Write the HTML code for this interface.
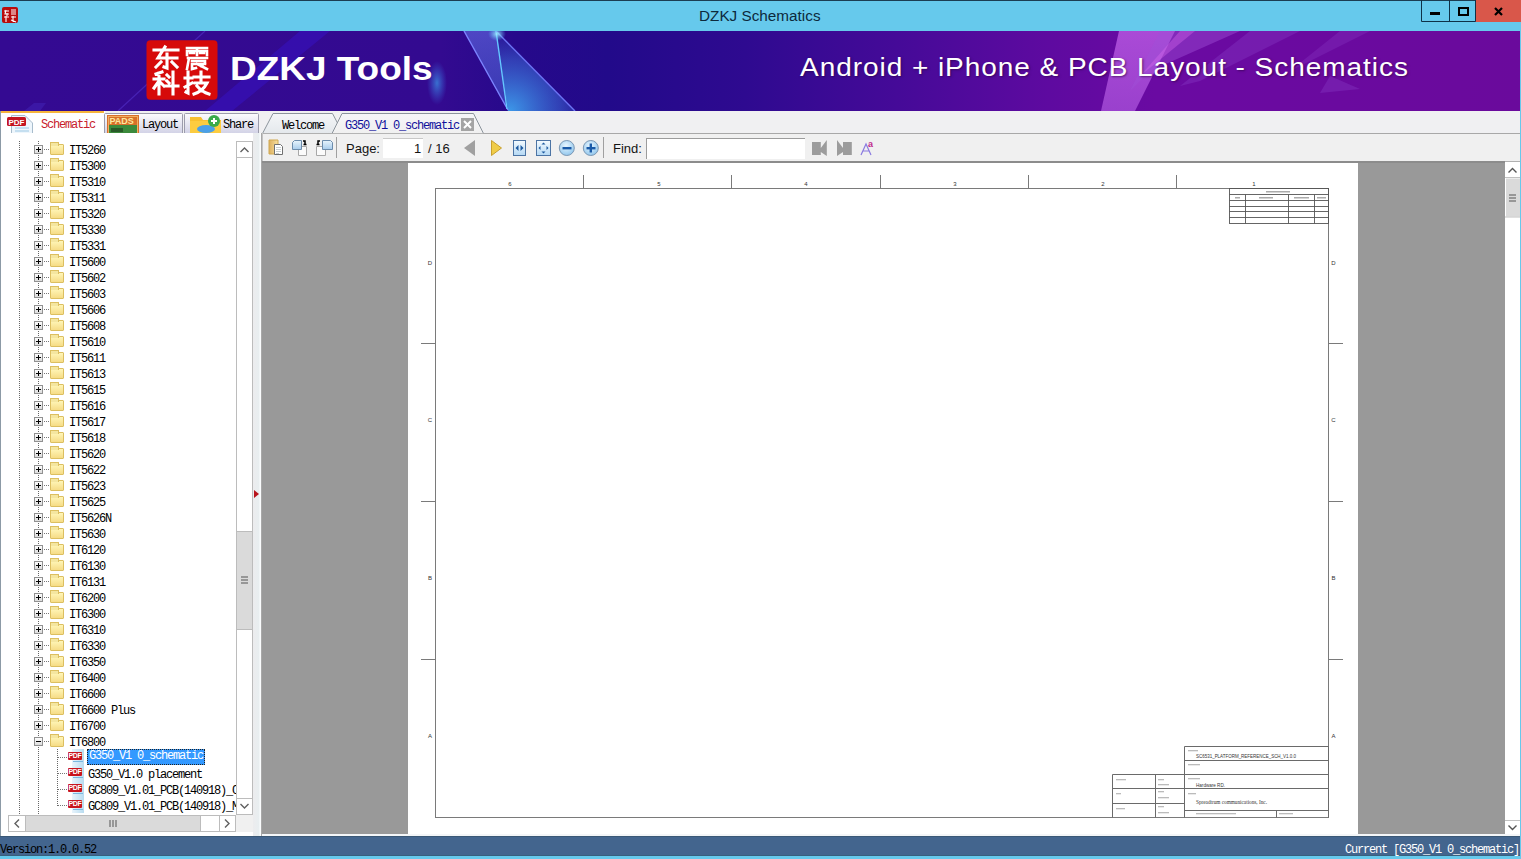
<!DOCTYPE html>
<html><head><meta charset="utf-8"><style>
*{margin:0;padding:0;box-sizing:border-box}
html,body{width:1521px;height:859px;overflow:hidden;background:#f0f0f0;font-family:"Liberation Sans",sans-serif;position:relative}
.abs{position:absolute}
#title{position:absolute;left:0;top:0;width:1521px;height:31px;background:#66c9ec;border-top:1px solid #1b3d52}
#title .t{position:absolute;left:699px;top:6px;font-size:15.3px;color:#0d2a3c;white-space:nowrap}
#winb{position:absolute;left:1421px;top:0;width:100px;height:22px}
#banner{position:absolute;left:0;top:31px;width:1520px;height:80px;overflow:hidden;background:linear-gradient(90deg,#330a90 0%,#330a90 30%,#2c0a8e 40%,#3a0b94 55%,#5a0aa0 75%,#6a0a9e 100%)}
#rborder{position:absolute;left:1520px;top:0;width:1px;height:859px;background:#66c9ec}
#tabs{position:absolute;left:0;top:111px;width:1520px;height:22px;background:#f0f0f2}
#left{position:absolute;left:0;top:133px;width:262px;height:703px;background:#fff;overflow:hidden}
#toolbar{position:absolute;left:262px;top:133px;width:1258px;height:28px;background:#f0f0f0;border-top:1px solid #b4b4b4}
#doc{position:absolute;left:262px;top:161px;width:1243px;height:673px;background:#999;border-top:2px solid #8c8c8c;overflow:hidden}
#page{position:absolute;left:146px;top:0px;width:950px;height:700px;background:#fff}
#vscroll{position:absolute;left:1505px;top:161px;width:15px;height:673px;background:#fff}
#strip{position:absolute;left:262px;top:834px;width:1258px;height:2px;background:#f4f6f8}
#status{position:absolute;left:0;top:836px;width:1520px;height:20px;background:#43658e;border-top:1px solid #3a5876;border-bottom:1px solid #38607e}
#bottom{position:absolute;left:0;top:856px;width:1521px;height:3px;background:#66c9ec}
.mono{font-family:"Liberation Mono",monospace;font-size:12px;letter-spacing:-1.2px;white-space:nowrap}
/* tree */
.row{position:absolute;left:0;height:16px;width:262px}
.pb{position:absolute;left:34px;top:4px;width:9px;height:9px;border:1px solid #919191;background:linear-gradient(#fdfdfd,#dcdcdc)}
.ph{position:absolute;left:1px;top:3px;width:5px;height:1px;background:#000}
.pv{position:absolute;left:3px;top:1px;width:1px;height:5px;background:#000}
.dh{position:absolute;left:44px;top:8px;width:6px;height:1px;background:repeating-linear-gradient(90deg,#777 0 1px,transparent 1px 2px)}
.fd{position:absolute;left:50px;top:3px;width:14px;height:11px;border-radius:1px;background:linear-gradient(#fff6b8,#f6dc86);border:1px solid #dcbf60}
.fd::before{content:"";position:absolute;left:-1px;top:-3px;width:7px;height:3px;background:#f4e6a0;border:1px solid #dcbf60;border-bottom:none}
.tx{position:absolute;left:69px;top:3px;font-family:"Liberation Mono",monospace;font-size:12px;letter-spacing:-1.2px;white-space:nowrap;color:#000;line-height:14px}
.tx2{position:absolute;left:88px;top:3px;font-family:"Liberation Mono",monospace;font-size:12px;letter-spacing:-1.2px;white-space:nowrap;color:#000;line-height:14px}
.tx2.sel{left:87px;top:0;padding:0 2px;background:#3399ff;color:#fff;outline:1px dotted #222;outline-offset:-1px;height:16px;line-height:15px;width:118px}
.dh2{position:absolute;left:58px;top:8px;width:10px;height:1px;background:repeating-linear-gradient(90deg,#777 0 1px,transparent 1px 2px)}
.pdf{position:absolute;left:68px;top:0;width:16px;height:16px}
.pdf::after{content:"";position:absolute;left:4px;top:0;width:12px;height:16px;background:linear-gradient(90deg,#e8f4fc,#b8dcf0);}
.pdf em{position:absolute;left:0;top:3px;width:14px;height:8px;background:#c8141e;border-radius:1px;z-index:1;font:bold 7px/8px "Liberation Sans",sans-serif;color:#fff;font-style:normal;text-align:center;letter-spacing:-0.3px}
.pdf::before{content:"";position:absolute;left:5px;top:12px;width:10px;height:1px;background:#7ab8e0;z-index:2}
.vd{position:absolute;width:1px;background:repeating-linear-gradient(180deg,#666 0 1px,transparent 1px 2px)}
.bt1{position:absolute;left:230px;top:20px;font-size:33px;font-weight:bold;color:#fff;white-space:nowrap;transform:scaleX(1.12);transform-origin:0 0;line-height:36px}
.bt2{position:absolute;left:800px;top:21px;font-size:25px;color:#fff;white-space:nowrap;letter-spacing:0.85px;line-height:30px;text-shadow:1px 1px 2px rgba(40,0,60,0.6);transform:scaleX(1.12);transform-origin:0 0}
.tt{position:absolute;font-family:"Liberation Mono",monospace;font-size:12px;letter-spacing:-1.2px;white-space:nowrap;color:#000;line-height:14px}
.tb{position:absolute;font-size:13px;color:#141414;white-space:nowrap;line-height:16px}
.st{position:absolute;font-family:"Liberation Mono",monospace;font-size:12px;letter-spacing:-1.2px;white-space:nowrap;line-height:14px}

</style></head><body>
<div id="title"><div class="t">DZKJ Schematics</div></div>
<div id="banner"><svg width="1520" height="80" viewBox="0 0 1520 80" style="position:absolute;left:0;top:0">
<defs>
<linearGradient id="bg" x1="0" y1="0" x2="1520" y2="0" gradientUnits="userSpaceOnUse">
<stop offset="0" stop-color="#340a92"/>
<stop offset="0.29" stop-color="#330a90"/>
<stop offset="0.34" stop-color="#26098b"/>
<stop offset="0.40" stop-color="#220a8a"/>
<stop offset="0.49" stop-color="#2e0a90"/>
<stop offset="0.59" stop-color="#450a98"/>
<stop offset="0.69" stop-color="#5e0aa0"/>
<stop offset="0.76" stop-color="#6a0aa2"/>
<stop offset="1" stop-color="#6a0a9c"/>
</linearGradient>
<linearGradient id="prism" x1="0" y1="0" x2="0" y2="1">
<stop offset="0" stop-color="#5a7ce8" stop-opacity="0.25"/>
<stop offset="1" stop-color="#4a9ff0" stop-opacity="0.6"/>
</linearGradient>
<radialGradient id="glow"><stop offset="0" stop-color="#a0f0ff" stop-opacity="0.9"/><stop offset="1" stop-color="#60c0ff" stop-opacity="0"/></radialGradient>
<radialGradient id="blob"><stop offset="0" stop-color="#3a8ae0" stop-opacity="0.8"/><stop offset="1" stop-color="#3a6ae0" stop-opacity="0"/></radialGradient>
<linearGradient id="band" x1="0" y1="0" x2="0" y2="1">
<stop offset="0" stop-color="#c060e8" stop-opacity="0.75"/>
<stop offset="1" stop-color="#b058e0" stop-opacity="0.7"/>
</linearGradient>
</defs>
<rect width="1520" height="80" fill="url(#bg)"/>
<!-- faint streaks left -->
<path d="M118 80 L205 0" stroke="#5a3ad8" stroke-width="1.2" opacity="0.5"/>
<polygon points="205,80 232,80 330,0 300,0" fill="#3a18e0" opacity="0.35"/>
<polygon points="24,80 40,80 46,72 34,72" fill="#4a30c8" opacity="0.35"/>
<!-- prism -->
<linearGradient id="pl" x1="0" y1="0" x2="0" y2="1"><stop offset="0" stop-color="#6a78f0" stop-opacity="0.55"/><stop offset="1" stop-color="#4a70e0" stop-opacity="0.45"/></linearGradient>
<radialGradient id="pr" cx="510" cy="80" r="85" gradientUnits="userSpaceOnUse"><stop offset="0" stop-color="#40b0f8" stop-opacity="0.85"/><stop offset="0.6" stop-color="#4080e8" stop-opacity="0.45"/><stop offset="1" stop-color="#3050d0" stop-opacity="0.1"/></radialGradient>
<polygon points="464,0 496,0 508,80" fill="url(#pl)"/>
<polygon points="496,0 575,80 508,80" fill="url(#pr)"/>
<path d="M464 0 L508 79" stroke="#7c84ff" stroke-width="1.4" fill="none"/>
<path d="M496 0 L507 78" stroke="#64c8ff" stroke-width="1.4" fill="none"/>
<path d="M496 0 L575 80" stroke="#6c74f4" stroke-width="1.4" fill="none"/>
<ellipse cx="497" cy="3" rx="9" ry="7" fill="url(#glow)"/>
<ellipse cx="437" cy="52" rx="10" ry="22" fill="url(#blob)"/>
<!-- purple band -->
<polygon points="1119,0 1175,0 1135,80 1101,80" fill="url(#band)"/>
<polygon points="1160,0 1240,0 1150,40 1130,60" fill="#a050d8" opacity="0.45"/>
<polygon points="1180,0 1195,0 1140,45" fill="#e070f0" opacity="0.35"/>
<polygon points="1250,0 1300,0 1200,50 1180,55" fill="#8a40c8" opacity="0.35"/>
<polygon points="1340,0 1370,0 1290,40" fill="#8a40c8" opacity="0.3"/>
<polygon points="1330,45 1360,58 1320,62" fill="#8a40c8" opacity="0.35"/>
<!-- logo -->
<rect x="146.5" y="9.3" width="71" height="59.5" rx="4" fill="#d60a0a"/>
<g stroke="#fff" stroke-width="3.1" fill="none" stroke-linecap="square" transform="translate(153,16)">
<!-- 东 -->
<path d="M1 3 H25 M12 0 L5 11 H24 M14 7 V21 L11 20 M8 15 L3 20 M19 15 L24 20"/>
</g>
<g stroke="#fff" stroke-width="2.6" fill="none" stroke-linecap="square" transform="translate(184,16)">
<!-- 震 -->
<path d="M3 1 H23 M3 4 V8 M3 4 H23 V8 M13 1 V8 M6 6 H10 M16 6 H20 M4 11 H23 M5 11 L3 22 M8 14 H21 M8 17 H21 M8 17 V22 L12 21 M13 17 L23 22 M17 19 L21 16"/>
</g>
<g stroke="#fff" stroke-width="3.1" fill="none" stroke-linecap="square" transform="translate(153,41)">
<!-- 科 -->
<path d="M3 2 L9 0 M1 7 H11 M6 1 V22 M6 9 L1 16 M7 10 L11 14 M14 3 L16 5 M14 9 L16 11 M13 14 H25 M20 0 V22"/>
</g>
<g stroke="#fff" stroke-width="3.1" fill="none" stroke-linecap="square" transform="translate(184,41)">
<!-- 技 -->
<path d="M1 6 H8 M4 0 V21 L2 20 M1 15 L8 11 M10 5 H25 M17 0 V10 M11 11 H23 Q19 19 10 22 M13 14 Q18 20 25 22"/>
</g>
</svg>
<div class="bt1">DZKJ Tools</div><div class="bt2">Android + iPhone &amp; PCB Layout - Schematics</div></div>
<div id="rborder"></div>
<div id="tabs"></div>
<svg width="520" height="24" style="position:absolute;left:0;top:110px">
<defs>
<linearGradient id="tg" x1="0" y1="0" x2="0" y2="1"><stop offset="0" stop-color="#fcfcfe"/><stop offset="1" stop-color="#d2d2e6"/></linearGradient>
<linearGradient id="wg" x1="0" y1="0" x2="0" y2="1"><stop offset="0" stop-color="#f4f6f8"/><stop offset="1" stop-color="#e4e8ec"/></linearGradient>
<linearGradient id="ag" x1="0" y1="0" x2="0" y2="1"><stop offset="0" stop-color="#f6f6f8"/><stop offset="1" stop-color="#f0f0f0"/></linearGradient>
</defs>
<!-- active Schematic tab -->
<rect x="0" y="1" width="105" height="23" fill="#fff"/>
<rect x="1" y="1" width="103" height="2" fill="#f6b43c"/>
<rect x="0" y="1" width="1" height="23" fill="#8a9aa8"/>
<!-- layout tab -->
<path d="M104.5 23.5 V4.5 Q104.5 3.5 105.5 3.5 H181.5 Q182.5 3.5 182.5 4.5 V23.5" fill="url(#tg)" stroke="#9c9cac"/>
<path d="M184.5 23.5 V4.5 Q184.5 3.5 185.5 3.5 H257.5 Q258.5 3.5 258.5 4.5 V23.5" fill="url(#tg)" stroke="#9c9cac"/>
<!-- doc tabs -->
<path d="M262.5 23.5 L273 3.5 H332.5 L343 23.5" fill="url(#wg)" stroke="#8c949c"/>
<path d="M332 23.5 L342 3.5 H473.5 L483.5 23.5 H520" fill="url(#ag)" stroke="#8c949c"/>
<rect x="333" y="23" width="150" height="2" fill="#f0f0f0"/>
<rect x="461" y="8" width="13" height="13" fill="#a4a4a4"/>
<path d="M464 11 L471 18 M471 11 L464 18" stroke="#fff" stroke-width="2"/>
<!-- Schematic icon: doc + PDF badge -->
<path d="M11.5 5.5 H25 L32.5 13 V23.5 H11.5 Z" fill="#eef6fc" stroke="#a8bccc"/>
<path d="M15 18 H29 M15 21 H29" stroke="#b8d8ec" stroke-width="1.5"/>
<rect x="7" y="7" width="19" height="9" rx="1.5" fill="#c41420"/>
<text x="8.5" y="14.5" font-family="Liberation Sans" font-weight="bold" font-size="8" fill="#fff">PDF</text>
<!-- PADS icon -->
<rect x="107" y="5" width="32" height="18" fill="#d8702a"/>
<rect x="108.5" y="6.5" width="29" height="16" fill="none" stroke="#f0b060" stroke-width="1"/>
<text x="109.5" y="14" font-family="Liberation Sans" font-weight="bold" font-size="9" fill="#fce8a0">PADS</text>
<rect x="109" y="15" width="28" height="8" fill="#3c8a3c"/>
<rect x="111" y="18" width="12" height="4" fill="#285a28"/>
<!-- Share icon -->
<path d="M190 7 H201 L203 10 H221 V23 H190 Z" fill="#f8c030"/>
<path d="M190 11 H221 V23 H190 Z" fill="#fccc40"/>
<ellipse cx="206" cy="19" rx="9" ry="4" fill="#4aa0e8"/>
<circle cx="214" cy="11" r="6" fill="#3aaa4a"/>
<path d="M211 11 H217 M214 8 V14" stroke="#fff" stroke-width="2"/>
</svg>
<div class="tt" style="left:41px;top:118px;color:#c8202c">Schematic</div>
<div class="tt" style="left:142px;top:118px">Layout</div>
<div class="tt" style="left:223px;top:118px">Share</div>
<div class="tt" style="left:282px;top:119px">Welcome</div>
<div class="tt" style="left:345px;top:119px;color:#10109c">G350_V1 0_schematic</div>

<div id="left">
<div class="vd" style="left:19px;top:8px;height:674px"></div>
<div class="vd" style="left:38px;top:8px;height:674px"></div>
<div class="vd" style="left:57px;top:616px;height:57px"></div>
<div class="row" style="top:8px"><b class="pb"><i class=ph></i><i class=pv></i></b><s class="dh"></s><u class="fd"></u><span class="tx">IT5260</span></div>
<div class="row" style="top:24px"><b class="pb"><i class=ph></i><i class=pv></i></b><s class="dh"></s><u class="fd"></u><span class="tx">IT5300</span></div>
<div class="row" style="top:40px"><b class="pb"><i class=ph></i><i class=pv></i></b><s class="dh"></s><u class="fd"></u><span class="tx">IT5310</span></div>
<div class="row" style="top:56px"><b class="pb"><i class=ph></i><i class=pv></i></b><s class="dh"></s><u class="fd"></u><span class="tx">IT5311</span></div>
<div class="row" style="top:72px"><b class="pb"><i class=ph></i><i class=pv></i></b><s class="dh"></s><u class="fd"></u><span class="tx">IT5320</span></div>
<div class="row" style="top:88px"><b class="pb"><i class=ph></i><i class=pv></i></b><s class="dh"></s><u class="fd"></u><span class="tx">IT5330</span></div>
<div class="row" style="top:104px"><b class="pb"><i class=ph></i><i class=pv></i></b><s class="dh"></s><u class="fd"></u><span class="tx">IT5331</span></div>
<div class="row" style="top:120px"><b class="pb"><i class=ph></i><i class=pv></i></b><s class="dh"></s><u class="fd"></u><span class="tx">IT5600</span></div>
<div class="row" style="top:136px"><b class="pb"><i class=ph></i><i class=pv></i></b><s class="dh"></s><u class="fd"></u><span class="tx">IT5602</span></div>
<div class="row" style="top:152px"><b class="pb"><i class=ph></i><i class=pv></i></b><s class="dh"></s><u class="fd"></u><span class="tx">IT5603</span></div>
<div class="row" style="top:168px"><b class="pb"><i class=ph></i><i class=pv></i></b><s class="dh"></s><u class="fd"></u><span class="tx">IT5606</span></div>
<div class="row" style="top:184px"><b class="pb"><i class=ph></i><i class=pv></i></b><s class="dh"></s><u class="fd"></u><span class="tx">IT5608</span></div>
<div class="row" style="top:200px"><b class="pb"><i class=ph></i><i class=pv></i></b><s class="dh"></s><u class="fd"></u><span class="tx">IT5610</span></div>
<div class="row" style="top:216px"><b class="pb"><i class=ph></i><i class=pv></i></b><s class="dh"></s><u class="fd"></u><span class="tx">IT5611</span></div>
<div class="row" style="top:232px"><b class="pb"><i class=ph></i><i class=pv></i></b><s class="dh"></s><u class="fd"></u><span class="tx">IT5613</span></div>
<div class="row" style="top:248px"><b class="pb"><i class=ph></i><i class=pv></i></b><s class="dh"></s><u class="fd"></u><span class="tx">IT5615</span></div>
<div class="row" style="top:264px"><b class="pb"><i class=ph></i><i class=pv></i></b><s class="dh"></s><u class="fd"></u><span class="tx">IT5616</span></div>
<div class="row" style="top:280px"><b class="pb"><i class=ph></i><i class=pv></i></b><s class="dh"></s><u class="fd"></u><span class="tx">IT5617</span></div>
<div class="row" style="top:296px"><b class="pb"><i class=ph></i><i class=pv></i></b><s class="dh"></s><u class="fd"></u><span class="tx">IT5618</span></div>
<div class="row" style="top:312px"><b class="pb"><i class=ph></i><i class=pv></i></b><s class="dh"></s><u class="fd"></u><span class="tx">IT5620</span></div>
<div class="row" style="top:328px"><b class="pb"><i class=ph></i><i class=pv></i></b><s class="dh"></s><u class="fd"></u><span class="tx">IT5622</span></div>
<div class="row" style="top:344px"><b class="pb"><i class=ph></i><i class=pv></i></b><s class="dh"></s><u class="fd"></u><span class="tx">IT5623</span></div>
<div class="row" style="top:360px"><b class="pb"><i class=ph></i><i class=pv></i></b><s class="dh"></s><u class="fd"></u><span class="tx">IT5625</span></div>
<div class="row" style="top:376px"><b class="pb"><i class=ph></i><i class=pv></i></b><s class="dh"></s><u class="fd"></u><span class="tx">IT5626N</span></div>
<div class="row" style="top:392px"><b class="pb"><i class=ph></i><i class=pv></i></b><s class="dh"></s><u class="fd"></u><span class="tx">IT5630</span></div>
<div class="row" style="top:408px"><b class="pb"><i class=ph></i><i class=pv></i></b><s class="dh"></s><u class="fd"></u><span class="tx">IT6120</span></div>
<div class="row" style="top:424px"><b class="pb"><i class=ph></i><i class=pv></i></b><s class="dh"></s><u class="fd"></u><span class="tx">IT6130</span></div>
<div class="row" style="top:440px"><b class="pb"><i class=ph></i><i class=pv></i></b><s class="dh"></s><u class="fd"></u><span class="tx">IT6131</span></div>
<div class="row" style="top:456px"><b class="pb"><i class=ph></i><i class=pv></i></b><s class="dh"></s><u class="fd"></u><span class="tx">IT6200</span></div>
<div class="row" style="top:472px"><b class="pb"><i class=ph></i><i class=pv></i></b><s class="dh"></s><u class="fd"></u><span class="tx">IT6300</span></div>
<div class="row" style="top:488px"><b class="pb"><i class=ph></i><i class=pv></i></b><s class="dh"></s><u class="fd"></u><span class="tx">IT6310</span></div>
<div class="row" style="top:504px"><b class="pb"><i class=ph></i><i class=pv></i></b><s class="dh"></s><u class="fd"></u><span class="tx">IT6330</span></div>
<div class="row" style="top:520px"><b class="pb"><i class=ph></i><i class=pv></i></b><s class="dh"></s><u class="fd"></u><span class="tx">IT6350</span></div>
<div class="row" style="top:536px"><b class="pb"><i class=ph></i><i class=pv></i></b><s class="dh"></s><u class="fd"></u><span class="tx">IT6400</span></div>
<div class="row" style="top:552px"><b class="pb"><i class=ph></i><i class=pv></i></b><s class="dh"></s><u class="fd"></u><span class="tx">IT6600</span></div>
<div class="row" style="top:568px"><b class="pb"><i class=ph></i><i class=pv></i></b><s class="dh"></s><u class="fd"></u><span class="tx">IT6600 Plus</span></div>
<div class="row" style="top:584px"><b class="pb"><i class=ph></i><i class=pv></i></b><s class="dh"></s><u class="fd"></u><span class="tx">IT6700</span></div>
<div class="row" style="top:600px"><b class="pb"><i class=ph></i></b><s class="dh"></s><u class="fd"></u><span class="tx">IT6800</span></div>
<div class="row" style="top:616px"><s class="dh2"></s><u class="pdf"><em>PDF</em></u><span class="tx2 sel">G350_V1 0_schematic</span></div>
<div class="row" style="top:632px"><s class="dh2"></s><u class="pdf"><em>PDF</em></u><span class="tx2">G350_V1.0 placement</span></div>
<div class="row" style="top:648px"><s class="dh2"></s><u class="pdf"><em>PDF</em></u><span class="tx2">GC809_V1.01_PCB(140918)_C</span></div>
<div class="row" style="top:664px"><s class="dh2"></s><u class="pdf"><em>PDF</em></u><span class="tx2">GC809_V1.01_PCB(140918)_M</span></div>
</div>
<div id="toolbar"></div>
<svg width="1258" height="30" style="position:absolute;left:262px;top:133px">
<defs>
<linearGradient id="fbg" x1="0" y1="0" x2="0" y2="1"><stop offset="0" stop-color="#f4fbff"/><stop offset="1" stop-color="#b4d8f4"/></linearGradient>
<radialGradient id="zg" cx="0.45" cy="0.35" r="0.7"><stop offset="0" stop-color="#e8f6ff"/><stop offset="1" stop-color="#8cc4ec"/></radialGradient>
<linearGradient id="fold" x1="0" y1="0" x2="1" y2="0"><stop offset="0" stop-color="#dcb060"/><stop offset="1" stop-color="#f8e0a0"/></linearGradient>
<linearGradient id="bdoc" x1="0" y1="0" x2="0" y2="1"><stop offset="0" stop-color="#e8f4fc"/><stop offset="1" stop-color="#a8ccec"/></linearGradient>
</defs>
<rect x="0" y="0" width="71" height="1" fill="#b0b0b0"/><rect x="221" y="0" width="1037" height="1" fill="#a8a8a8"/>
<rect x="0" y="0" width="1" height="30" fill="#c4c4c4"/>
<!-- icon1 folder+doc -->
<path d="M7 7 H16 V21 H7 Z" fill="url(#fold)" stroke="#d0a850" stroke-width="1"/>
<path d="M12.5 11.5 H18.5 L20.5 13.5 V21.5 H12.5 Z" fill="#fff" stroke="#707070"/>
<path d="M14 14.5 H19 M14 16.5 H19 M14 18.5 H19 M14 20.5 H17" stroke="#a4b0b4" stroke-width="0.6"/>
<!-- icon2 -->
<path d="M36.5 13.5 H44.5 V22.5 H36.5 Z" fill="#fbfbfb" stroke="#a8a8a8"/>
<path d="M30.5 9.5 L32.5 7.5 H39.5 V16.5 H30.5 Z" fill="url(#bdoc)" stroke="#6c8cac"/>
<path d="M41 8 H43 V11 M41.5 11.5 H44.5" stroke="#000" stroke-width="1.5" fill="none"/>
<!-- icon3 -->
<path d="M54.5 13.5 H63.5 V22.5 H54.5 Z" fill="#fbfbfb" stroke="#a8a8a8"/>
<path d="M60.5 7.5 H68.5 L70.5 9.5 V16.5 H60.5 Z" fill="url(#bdoc)" stroke="#6c8cac"/>
<path d="M58 8 H56 V11 M54.5 11.5 H57.5" stroke="#000" stroke-width="1.5" fill="none"/>
<rect x="74" y="4" width="1" height="21" fill="#a0a0a0"/>
<!-- page input -->
<rect x="121" y="5" width="40" height="20" fill="#fff"/>
<rect x="121" y="5" width="40" height="1" fill="#c8c8c8"/>
<!-- prev / next -->
<path d="M202 15 L213 7 V23 Z" fill="#a0a0a0"/>
<path d="M229.5 7.5 L239.5 15 L229.5 22.5 Z" fill="#f0cc48" stroke="#c8a030"/>
<!-- fit width -->
<rect x="251.5" y="7.5" width="12" height="15" fill="url(#fbg)" stroke="#4c74a4"/>
<path d="M253.5 15 L256.5 12 V18 Z M261.5 15 L258.5 12 V18 Z" fill="#1c5aa0"/>
<!-- fit page -->
<rect x="274.5" y="7.5" width="14" height="15" fill="url(#fbg)" stroke="#4c74a4"/>
<path d="M281.5 9.5 L279.5 11.5 H283.5 Z M281.5 20.5 L279.5 18.5 H283.5 Z M276.5 15 L278.5 13 V17 Z M286.5 15 L284.5 13 V17 Z" fill="#1c5aa0"/>
<!-- zoom out -->
<circle cx="304.8" cy="15" r="7.5" fill="url(#zg)" stroke="#7c98b4"/>
<rect x="300.5" y="14" width="9" height="2.4" fill="#1a5aa8"/>
<!-- zoom in -->
<circle cx="328.8" cy="15" r="7.5" fill="url(#zg)" stroke="#7c98b4"/>
<rect x="324.5" y="14" width="9" height="2.4" fill="#1a5aa8"/>
<rect x="327.6" y="10.5" width="2.4" height="9" fill="#1a5aa8"/>
<rect x="341" y="4" width="1" height="21" fill="#a0a0a0"/>
<!-- find input -->
<rect x="384" y="5" width="159" height="21" fill="#fff"/>
<rect x="384" y="5" width="159" height="1" fill="#9c9c9c"/>
<rect x="384" y="5" width="1" height="21" fill="#9c9c9c"/>
<!-- skip prev -->
<path d="M550 9 H558.8 V15 L564.8 7 V23 L558.8 19 V22 H550 Z" fill="#9c9c9c"/>
<!-- skip next -->
<path d="M589.8 9 H581 V15 L575 7 V23 L581 19 V22 H589.8 Z" fill="#9c9c9c"/>
<!-- Aa -->
<path d="M599 22 L604 11 L609 22 M601 18 H607" stroke="#8a7ae0" stroke-width="1.2" fill="none"/>
<text x="606" y="14" font-family="Liberation Sans" font-size="9" font-weight="bold" fill="#c0288c">a</text>
</svg>
<div class="tb" style="left:346px;top:141px">Page:</div>
<div class="tb" style="left:414px;top:141px">1</div>
<div class="tb" style="left:428px;top:141px">/ 16</div>
<div class="tb" style="left:613px;top:141px">Find:</div>

<div id="doc"></div>
<svg width="950" height="671" viewBox="408 163 950 671" style="position:absolute;left:408px;top:163px">
<rect x="408" y="163" width="950" height="671" fill="#fff"/>
<g stroke="#7a7a7a" stroke-width="1" fill="none">
<rect x="435.5" y="188.5" width="893" height="629"/>
<path d="M583.5 175 V188"/>
<path d="M731.5 175 V188"/>
<path d="M880.5 175 V188"/>
<path d="M1028.5 175 V188"/>
<path d="M1176.5 175 V188"/>
<path d="M421 343.5 H435 M1329 343.5 H1343"/>
<path d="M421 501.5 H435 M1329 501.5 H1343"/>
<path d="M421 659.5 H435 M1329 659.5 H1343"/>
</g>
<g font-family="Liberation Sans" font-size="6" fill="#333" text-anchor="middle">
<text x="510" y="186">6</text>
<text x="659" y="186">5</text>
<text x="806" y="186">4</text>
<text x="955" y="186">3</text>
<text x="1103" y="186">2</text>
<text x="1254" y="186">1</text>
<text x="430" y="265">D</text><text x="1333.5" y="265">D</text>
<text x="430" y="422">C</text><text x="1333.5" y="422">C</text>
<text x="430" y="580">B</text><text x="1333.5" y="580">B</text>
<text x="430" y="738">A</text><text x="1333.5" y="738">A</text>
</g>
<g stroke="#555" stroke-width="0.9" fill="none">
<rect x="1229.5" y="188.5" width="99" height="35"/>
<path d="M1229.5 194.5 H1328.5"/>
<path d="M1229.5 200.5 H1328.5"/>
<path d="M1229.5 206.5 H1328.5"/>
<path d="M1229.5 211.5 H1328.5"/>
<path d="M1229.5 217.5 H1328.5"/>
<path d="M1245.5 194.5 V223.5"/>
<path d="M1288.5 194.5 V223.5"/>
<path d="M1314.5 194.5 V223.5"/>
</g>
<g fill="#aaa"><rect x="1266" y="191" width="24" height="1.5"/><rect x="1235" y="197" width="5" height="1.5"/><rect x="1259" y="197" width="14" height="1.5"/><rect x="1294" y="197" width="15" height="1.5"/><rect x="1317" y="197" width="9" height="1.5"/></g>
<g stroke="#6a6a6a" stroke-width="1" fill="none">
<path d="M1184.5 746.5 H1328.5 V817.5 M1184.5 746.5 V817.5"/>
<path d="M1184.5 760.5 H1328.5"/>
<path d="M1184.5 774.5 H1328.5"/>
<path d="M1184.5 788.5 H1328.5"/>
<path d="M1184.5 810.5 H1328.5"/>
<path d="M1276.5 810.5 V817.5"/>
<path d="M1112.5 774.5 H1184.5 M1112.5 774.5 V817.5 M1112.5 788.5 H1184.5 M1112.5 803.5 H1184.5 M1155.5 774.5 V817.5"/>
</g>
<g font-family="Liberation Sans" fill="#333">
<text x="1196" y="758" font-size="6" textLength="100" lengthAdjust="spacingAndGlyphs">SC6531_PLATFORM_REFERENCE_SCH_V1.0.0</text>
<text x="1196" y="787" font-size="6" textLength="29" lengthAdjust="spacingAndGlyphs">Hardware RD.</text>
<text x="1196" y="804" font-family="Liberation Serif" font-size="6" textLength="71" lengthAdjust="spacingAndGlyphs">Spreadtrum communications, Inc.</text>
</g>
<g fill="#bbb">
<rect x="1188" y="750" width="10" height="1.3"/>
<rect x="1188" y="764" width="12" height="1.3"/>
<rect x="1188" y="778" width="12" height="1.3"/>
<rect x="1188" y="793" width="8" height="1.3"/>
<rect x="1196" y="813" width="40" height="1.3"/>
<rect x="1279" y="813" width="14" height="1.3"/>
<rect x="1116" y="779" width="10" height="1.3"/>
<rect x="1158" y="779" width="6" height="1.3"/>
<rect x="1158" y="784" width="11" height="1.3"/>
<rect x="1116" y="793" width="5" height="1.3"/>
<rect x="1158" y="791" width="6" height="1.3"/>
<rect x="1158" y="797" width="11" height="1.3"/>
<rect x="1116" y="808" width="9" height="1.3"/>
<rect x="1158" y="806" width="6" height="1.3"/>
<rect x="1158" y="812" width="11" height="1.3"/>
</g>
</svg>
<div id="vscroll"></div>
<div id="strip"></div>
<div id="status"></div>
<div id="bottom"></div>
<!-- window buttons -->
<svg width="100" height="23" style="position:absolute;left:1421px;top:0">
<rect x="54" y="0" width="46" height="22" fill="#d9574a"/>
<path d="M0.5 0 V21.5 H54.5 V0 M28.5 0 V21.5" stroke="#0e3148" fill="none"/>
<rect x="9" y="12" width="10" height="3" fill="#000"/>
<rect x="38" y="8" width="9" height="7" fill="none" stroke="#000" stroke-width="2"/>
<path d="M74 8 L81 15 M81 8 L74 15" stroke="#000" stroke-width="2.2"/>
</svg>
<!-- app icon -->
<svg width="17" height="17" style="position:absolute;left:2px;top:7px">
<rect x="0" y="0" width="16" height="16" rx="2" fill="#b80c0c"/>
<path d="M2 4 H7 M4 3 L3 7 H7 M5 6 V9 M9 3 H14 M9 5 H14 M9 7 H14 M2 10 H7 M4 9 V15 M9 10 H14 M11 9 V15 M9 13 L14 15" stroke="#fff" stroke-width="1.1" fill="none"/>
</svg>
<!-- left panel borders -->
<div style="position:absolute;left:0;top:133px;width:1px;height:703px;background:#8c9aa6"></div>
<div style="position:absolute;left:261px;top:133px;width:1px;height:703px;background:#a8a8a8"></div>
<div style="position:absolute;left:252px;top:133px;width:9px;height:703px;background:linear-gradient(90deg,#fff 0 1px,#ececee 1px,#e8eef0 7px,#fafcfd 8px)"></div>
<!-- tree vscroll -->
<svg width="17" height="693" style="position:absolute;left:236px;top:141px">
<rect x="0.5" y="0.5" width="16" height="673" fill="#fff" stroke="#bcbcbc"/>
<rect x="0.5" y="0.5" width="16" height="16" fill="#fff" stroke="#bcbcbc"/>
<path d="M4.5 11 L8.5 7 L12.5 11" stroke="#606060" stroke-width="1.4" fill="none"/>
<rect x="0.5" y="390.5" width="16" height="98" fill="#dadada" stroke="#bcbcbc"/>
<path d="M5 436 H12 M5 439 H12 M5 442 H12" stroke="#555" stroke-width="1"/>
<rect x="0.5" y="657.5" width="16" height="16" fill="#fff" stroke="#bcbcbc"/>
<path d="M4.5 663 L8.5 667 L12.5 663" stroke="#606060" stroke-width="1.4" fill="none"/>
<rect x="0" y="674" width="17" height="17" fill="#f0f0f0"/>
</svg>
<!-- tree hscroll -->
<svg width="230" height="18" style="position:absolute;left:8px;top:815px">
<rect x="0.5" y="0.5" width="227" height="16" fill="#fff" stroke="#bcbcbc"/>
<rect x="0.5" y="0.5" width="17" height="16" fill="#fff" stroke="#bcbcbc"/>
<path d="M11 4.5 L7 8.5 L11 12.5" stroke="#606060" stroke-width="1.4" fill="none"/>
<rect x="17.5" y="0.5" width="175" height="16" fill="#dadada" stroke="#bcbcbc"/>
<path d="M102 5 V12 M105 5 V12 M108 5 V12" stroke="#555" stroke-width="1"/>
<rect x="211.5" y="0.5" width="16" height="16" fill="#fff" stroke="#bcbcbc"/>
<path d="M217 4.5 L221 8.5 L217 12.5" stroke="#606060" stroke-width="1.4" fill="none"/>
</svg>
<!-- doc vscroll -->
<svg width="15" height="674" style="position:absolute;left:1505px;top:161px">
<rect x="0" y="0" width="15" height="673" fill="#fff"/>
<rect x="0" y="0" width="15" height="1" fill="#b0b0b0"/>
<path d="M3.5 11.5 L7.5 7.5 L11.5 11.5" stroke="#555" stroke-width="1.4" fill="none"/>
<rect x="0" y="16" width="15" height="1" fill="#c0c0c0"/>
<rect x="1" y="17.5" width="14" height="38" fill="#dadada"/>
<rect x="0" y="55.5" width="15" height="1" fill="#c0c0c0"/>
<path d="M4 34 H11 M4 37 H11 M4 40 H11" stroke="#555" stroke-width="1.2"/>
<rect x="0" y="659" width="15" height="1" fill="#c0c0c0"/>
<path d="M3.5 664.5 L7.5 668.5 L11.5 664.5" stroke="#555" stroke-width="1.4" fill="none"/>
</svg>
<!-- status text -->
<div class="st" style="left:0px;top:843px;color:#000">Version:1.0.0.52</div>
<div class="st" style="left:1345px;top:843px;color:#fff">Current [G350_V1 0_schematic]</div>
<svg width="6" height="9" style="position:absolute;left:254px;top:490px"><path d="M0 0 L5 4 L0 8 Z" fill="#b8141c"/></svg>


</body></html>
